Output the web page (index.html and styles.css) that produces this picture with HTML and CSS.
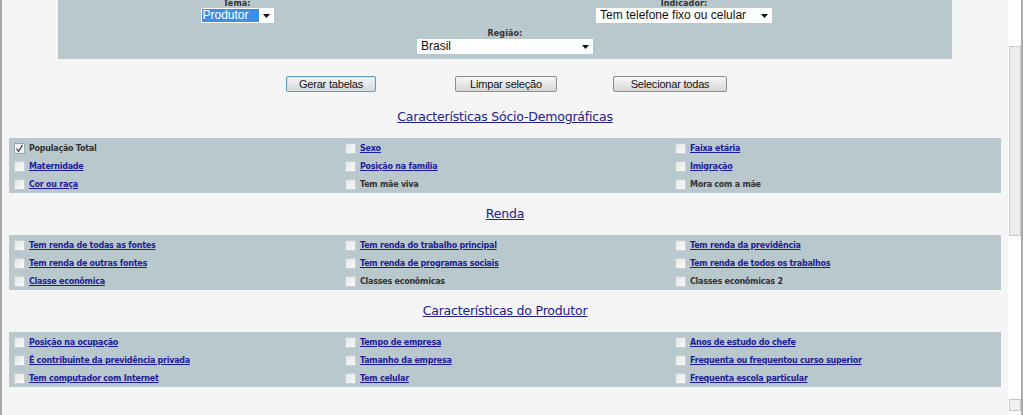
FILE: index.html
```html
<!DOCTYPE html>
<html lang="pt">
<head>
<meta charset="utf-8">
<title>Tabelas</title>
<link rel="stylesheet" href="styles.css">
</head>
<body>
<div class="window">
  <div class="page">
    <div class="filters">
      <div class="field">
        <div class="label">Tema:</div>
        <div class="select sel-tema"><span class="val picked">Produtor</span><svg class="arrow" width="7" height="4" viewBox="0 0 7 4"><path d="M0 0H7L3.5 4Z" fill="#111"/></svg></div>
      </div>
      <div class="field">
        <div class="label">Indicador:</div>
        <div class="select sel-wide"><span class="val">Tem telefone fixo ou celular</span><svg class="arrow" width="7" height="4" viewBox="0 0 7 4"><path d="M0 0H7L3.5 4Z" fill="#111"/></svg></div>
      </div>
      <div class="field span2">
        <div class="label">Região:</div>
        <div class="select sel-wide"><span class="val">Brasil</span><svg class="arrow" width="7" height="4" viewBox="0 0 7 4"><path d="M0 0H7L3.5 4Z" fill="#111"/></svg></div>
      </div>
    </div>

    <div class="actions">
      <button class="btn btn-focus">Gerar tabelas</button>
      <button class="btn btn-mid">Limpar seleção</button>
      <button class="btn">Selecionar todas</button>
    </div>

    <h2 class="section-title"><a href="#">Características Sócio-Demográficas</a></h2>
    <div class="box">
      <label class="item"><span class="cb checked"><svg width="9" height="9" viewBox="0 0 9 9"><path d="M1.5 4.5L3.5 7.5L7.5 1" fill="none" stroke="#333" stroke-width="1.2"/></svg></span><span class="txt">População Total</span></label>
      <label class="item"><span class="cb"></span><a class="lnk" href="#">Sexo</a></label>
      <label class="item"><span class="cb"></span><a class="lnk" href="#">Faixa etária</a></label>
      <label class="item"><span class="cb"></span><a class="lnk" href="#">Maternidade</a></label>
      <label class="item"><span class="cb"></span><a class="lnk" href="#">Posição na família</a></label>
      <label class="item"><span class="cb"></span><a class="lnk" href="#">Imigração</a></label>
      <label class="item"><span class="cb"></span><a class="lnk" href="#">Cor ou raça</a></label>
      <label class="item"><span class="cb"></span><span class="txt">Tem mãe viva</span></label>
      <label class="item"><span class="cb"></span><span class="txt">Mora com a mãe</span></label>
    </div>

    <h2 class="section-title"><a href="#">Renda</a></h2>
    <div class="box">
      <label class="item"><span class="cb"></span><a class="lnk" href="#">Tem renda de todas as fontes</a></label>
      <label class="item"><span class="cb"></span><a class="lnk" href="#">Tem renda do trabalho principal</a></label>
      <label class="item"><span class="cb"></span><a class="lnk" href="#">Tem renda da previdência</a></label>
      <label class="item"><span class="cb"></span><a class="lnk" href="#">Tem renda de outras fontes</a></label>
      <label class="item"><span class="cb"></span><a class="lnk" href="#">Tem renda de programas sociais</a></label>
      <label class="item"><span class="cb"></span><a class="lnk" href="#">Tem renda de todos os trabalhos</a></label>
      <label class="item"><span class="cb"></span><a class="lnk" href="#">Classe econômica</a></label>
      <label class="item"><span class="cb"></span><span class="txt">Classes econômicas</span></label>
      <label class="item"><span class="cb"></span><span class="txt">Classes econômicas 2</span></label>
    </div>

    <h2 class="section-title"><a href="#">Características do Produtor</a></h2>
    <div class="box">
      <label class="item"><span class="cb"></span><a class="lnk" href="#">Posição na ocupação</a></label>
      <label class="item"><span class="cb"></span><a class="lnk" href="#">Tempo de empresa</a></label>
      <label class="item"><span class="cb"></span><a class="lnk" href="#">Anos de estudo do chefe</a></label>
      <label class="item"><span class="cb"></span><a class="lnk" href="#">É contribuinte da previdência privada</a></label>
      <label class="item"><span class="cb"></span><a class="lnk" href="#">Tamanho da empresa</a></label>
      <label class="item"><span class="cb"></span><a class="lnk" href="#">Frequenta ou frequentou curso superior</a></label>
      <label class="item"><span class="cb"></span><a class="lnk" href="#">Tem computador com Internet</a></label>
      <label class="item"><span class="cb"></span><a class="lnk" href="#">Tem celular</a></label>
      <label class="item"><span class="cb"></span><a class="lnk" href="#">Frequenta escola particular</a></label>
    </div>
  </div>
  <div class="scrollbar">
    <div class="thumb"></div>
    <div class="track"></div>
    <div class="sb-btn"></div>
  </div>
</div>
</body>
</html>
```

FILE: styles.css
```css
html, body {
  margin: 0;
  padding: 0;
  height: 100%;
  overflow: hidden;
}
body {
  background: #f5f5f5;
  font-family: "DejaVu Sans", Verdana, sans-serif;
}
.window {
  display: flex;
  height: 415px;
}
.page {
  width: 992px;
  padding: 0 7px 0 7px;
  border-left: 2px solid #a9a9a9;
  background: #f5f5f5;
}

/* Filters panel */
.filters {
  margin: -1px 49px 0 49px;
  background: #b8c8cd;
  display: grid;
  grid-template-columns: 358px 1fr;
  padding-bottom: 5px;
}
.field {
  display: flex;
  flex-direction: column;
  align-items: center;
}
.span2 {
  grid-column: 1 / 3;
}
.label {
  font-size: 8px;
  line-height: 9px;
  height: 9px;
  font-weight: bold;
  color: #333;
  letter-spacing: 0.1px;
}
.span2 .label {
  margin-top: 6px;
  line-height: 10px;
  height: 10px;
}
.select {
  height: 15px;
  background: #fff;
  display: flex;
  align-items: center;
  justify-content: space-between;
  font-family: "Liberation Sans", Arial, sans-serif;
  font-size: 12px;
  color: #111;
  box-sizing: border-box;
}
.sel-tema {
  width: 73px;
  padding: 0 4px 0 1px;
}
.sel-wide {
  width: 176px;
  padding: 0 4px 0 4px;
}
.val {
  line-height: 13px;
}
.picked {
  background: #3b8fe8;
  color: #fff;
  padding: 0 3px 0 1px;
  width: 53px;
}
.arrow {
  display: block;
}

/* Buttons */
.actions {
  display: flex;
  justify-content: center;
  height: 16px;
  margin: 17px 0 4px;
  padding-left: 3px;
}
.btn {
  height: 16px;
  padding: 0;
  font-family: "Liberation Sans", Arial, sans-serif;
  font-size: 11px;
  color: #111;
  background: linear-gradient(#f6f6f6, #e6e6e6 55%, #d6d6d6);
  border: 1px solid #8c8c8c;
  border-radius: 2px;
  letter-spacing: -0.2px;
}
.btn:nth-child(1) { width: 90px; }
.btn:nth-child(2) { width: 102px; margin: 0 56px 0 79px; }
.btn:nth-child(3) { width: 114px; }
.btn-focus {
  border-color: #5f9fba;
  box-shadow: inset 0 0 0 1px #cfe3ec;
}

/* Section titles */
.section-title {
  margin: 0;
  padding: 13px 0 13px;
  height: 16px;
  text-align: center;
  font-weight: normal;
  font-size: 12.5px;
  letter-spacing: -0.2px;
  line-height: 16px;
}
.section-title a {
  color: #22208e;
  text-decoration: underline;
}

/* Boxes */
.box {
  background: #b8c8cd;
  display: grid;
  grid-template-columns: 331px 330px 1fr;
  grid-auto-rows: 18px;
  padding: 1px 0 0 5px;
  height: 55px;
  box-sizing: border-box;
}
.item {
  display: flex;
  align-items: center;
  font-size: 8px;
  font-weight: bold;
  letter-spacing: -0.25px;
  white-space: nowrap;
}
.cb {
  width: 9px;
  height: 9px;
  margin-right: 4px;
  border: 1px solid #c9cfd1;
  background: linear-gradient(135deg, #e4e6e7, #fafafa);
  display: flex;
  align-items: center;
  justify-content: center;
  flex: none;
}
.cb.checked {
  background: #f2f2f2;
  border-color: #9aa6aa;
}
.lnk {
  color: #1e1c9a;
  text-decoration: underline;
}
.txt {
  color: #333;
}

/* Scrollbar */
.scrollbar {
  width: 13px;
  border-right: 2px solid #a9a9a9;
  background: #fdfdfd;
  display: flex;
  flex-direction: column;
  padding-top: 46px;
  align-items: center;
}
.thumb {
  width: 10px;
  height: 188px;
  background: #ececec;
  border: 1px solid #cacaca;
  flex: none;
}
.track {
  flex: 1;
}
.sb-btn {
  width: 10px;
  height: 10px;
  border: 1px solid #c8c8c8;
  background: #f0f0f0;
  margin-bottom: 4px;
}
```
